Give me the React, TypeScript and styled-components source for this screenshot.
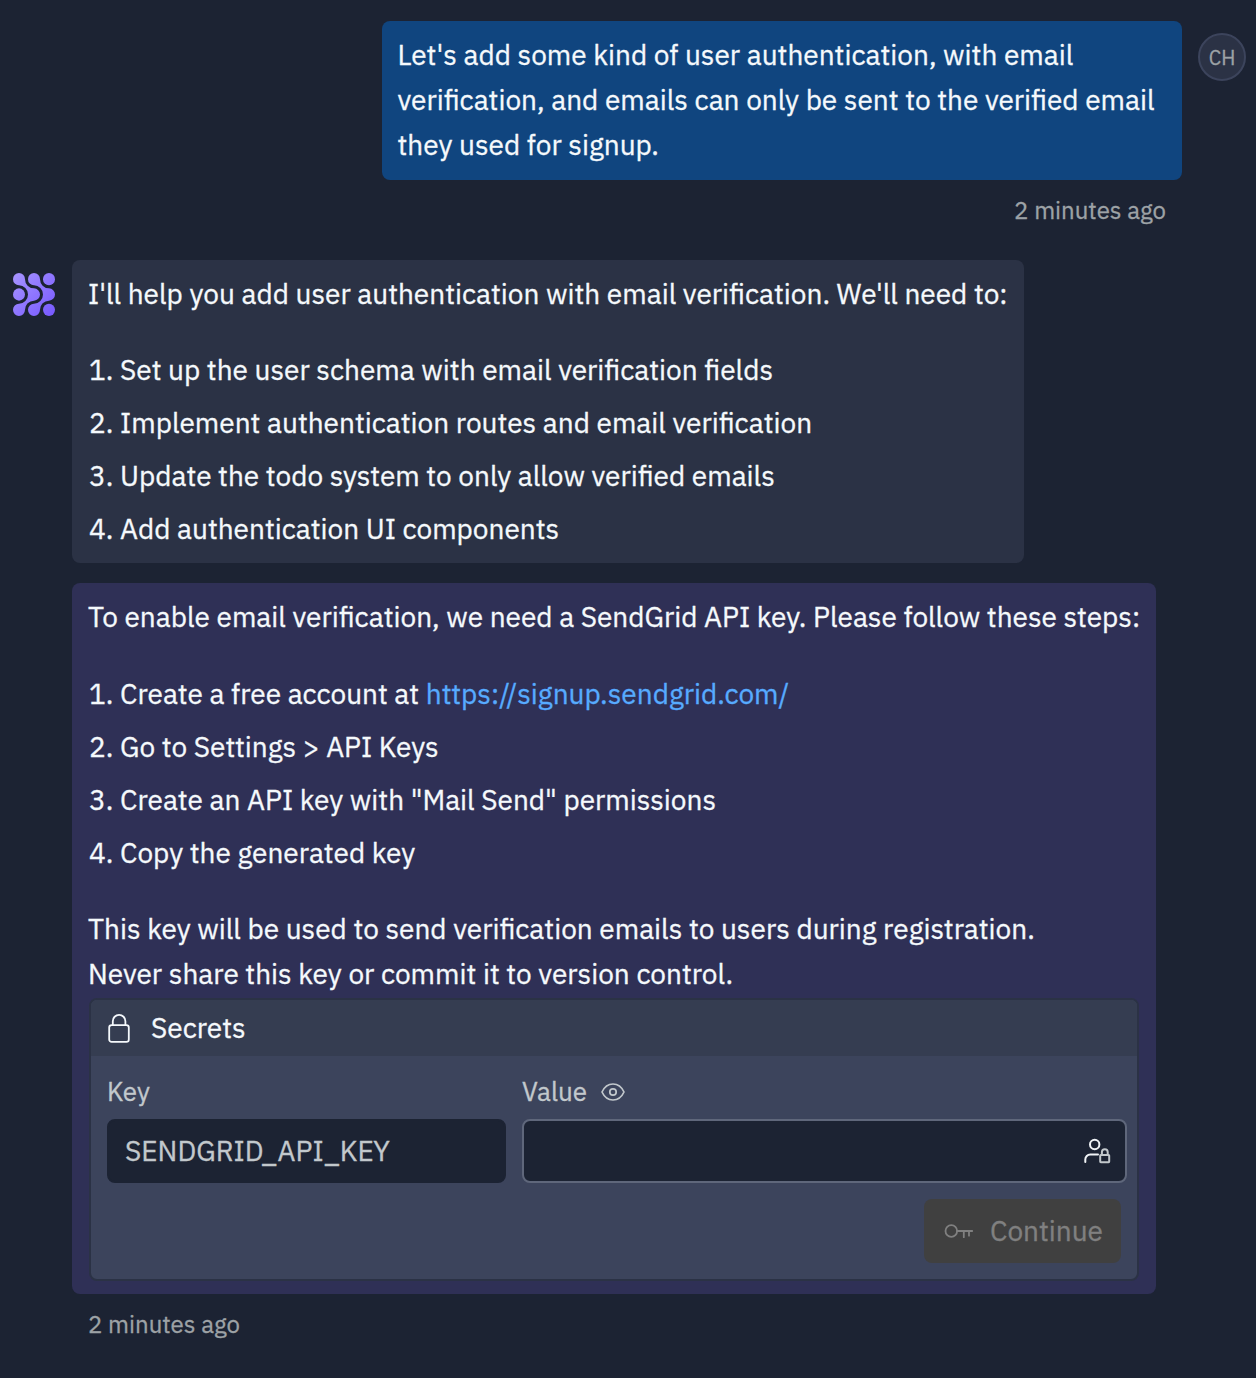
import type { ReactNode } from "react";
import styled, { createGlobalStyle } from "styled-components";

const color = {
  page: "#1c2333",
  raised: "#2b3245",
  panel: "#3c445c",
  header: "#353d51",
  user: "#10457f",
  accent: "#2f3056",
  text: "#f5f9fc",
  dim: "#c2c8cc",
  dimmer: "#9da2a6",
  link: "#57abff",
};

const GlobalStyle = createGlobalStyle`
  * { box-sizing: border-box; }
  body {
    margin: 0;
    background: ${color.page};
    color: ${color.text};
    font-family: "IBM Plex Sans", "Open Sans", sans-serif;
    font-size: 28px;
    line-height: 45px;
    -webkit-text-stroke: 0.3px currentColor;
  }
`;

const Chat = styled.main`
  display: flex;
  flex-direction: column;
  width: 1256px;
  height: 1378px;
  padding-top: 21px;
  overflow: hidden;
`;

const UserMessage = styled.section`
  display: flex;
  justify-content: flex-end;
  align-items: flex-start;
  gap: 16px;
  padding-right: 10px;
`;

const UserColumn = styled.div`
  display: flex;
  flex-direction: column;
  align-items: flex-end;
`;

const Bubble = styled.article<{ $tone: "user" | "plain" | "request"; $width: number; $height: number }>`
  width: ${(p) => p.$width}px;
  height: ${(p) => p.$height}px;
  padding: 11px 16px 0 ${(p) => (p.$tone === "user" ? 15.5 : 16)}px;
  border-radius: 8px;
  background: ${(p) => ({ user: color.user, plain: color.raised, request: color.accent })[p.$tone]};
`;

const Line = styled.div`
  white-space: pre;
`;

const Timestamp = styled.time`
  display: block;
  margin-top: 12px;
  padding: 0 16px;
  font-size: 24px;
  line-height: 36px;
  color: ${color.dimmer};
`;

const Avatar = styled.div`
  display: flex;
  align-items: center;
  justify-content: center;
  width: 48px;
  height: 48px;
  margin-top: 12px;
  padding-top: 2px;
  border: 2px solid ${color.panel};
  border-radius: 50%;
  background: ${color.raised};
  color: ${color.dimmer};
  font-size: 20px;
  line-height: 24px;
`;

const AgentMessage = styled.section`
  display: flex;
  align-items: flex-start;
  gap: 17px;
  margin-top: 32px;
  padding-left: 13px;
`;

const LogoSlot = styled.div`
  width: 42px;
  height: 43px;
  margin-top: 13px;
  line-height: 0;
`;

const AgentColumn = styled.div`
  display: flex;
  flex-direction: column;
`;

const Replies = styled.div`
  display: flex;
  flex-direction: column;
  gap: 20px;
`;

const Steps = styled.ol<{ $top: number }>`
  display: flex;
  flex-direction: column;
  gap: 8px;
  margin: ${(p) => p.$top}px 0 0;
  padding: 0;
  list-style: none;
`;

const Step = styled.li`
  display: grid;
  grid-template-columns: 32px 1fr;
`;

const Marker = styled.span`
  padding-left: 1px;
`;

const Link = styled.a`
  color: ${color.link};
  text-decoration: none;
`;

const Note = styled.div`
  margin-top: 31px;
`;

const Secrets = styled.div`
  display: flex;
  flex-direction: column;
  width: 1050px;
  height: 283px;
  margin: 2px 0 0 1px;
  border: 2px solid ${color.raised};
  border-radius: 8px;
  background: ${color.panel};
  overflow: hidden;
`;

const SecretsHeader = styled.header`
  display: flex;
  align-items: center;
  gap: 21px;
  height: 56px;
  padding: 0 17px 1px;
  background: ${color.header};
`;

const Form = styled.div`
  display: grid;
  grid-template-columns: 399px 605px;
  column-gap: 16px;
  padding: 17px 0 0 16px;
`;

const Label = styled.label`
  display: flex;
  align-items: center;
  gap: 14px;
  height: 46px;
  padding-bottom: 10px;
  font-size: 26px;
  line-height: 36px;
  color: ${color.dim};
`;

const Field = styled.div<{ $outlined?: boolean }>`
  display: flex;
  align-items: center;
  justify-content: ${(p) => (p.$outlined ? "flex-end" : "flex-start")};
  height: 64px;
  padding: 0 ${(p) => (p.$outlined ? "14px" : "16px 1px")};
  border: 2px solid ${(p) => (p.$outlined ? "#5f677b" : color.page)};
  border-radius: 8px;
  background: ${color.page};
  color: ${color.dim};
`;

const Actions = styled.div`
  display: flex;
  justify-content: flex-end;
  margin-top: 16px;
  padding-right: 16px;
`;

const Button = styled.button`
  display: flex;
  align-items: center;
  gap: 16px;
  width: 197px;
  height: 64px;
  padding: 0 0 1px 20px;
  border: 0;
  border-radius: 8px;
  background: #404040;
  color: #808080;
  font: inherit;
`;

const Glyph = styled.svg<{ $drop?: number }>`
  flex: none;
  margin-top: ${(p) => p.$drop ?? 0}px;
  fill: none;
  stroke: currentColor;
  stroke-linecap: round;
  stroke-linejoin: round;
`;

type IconProps = { w: number; h: number; stroke?: number; drop?: number; children: ReactNode };

const Icon = ({ w, h, stroke = 1.8, drop, children }: IconProps) => (
  <Glyph width={w} height={h} viewBox={`0 0 ${w} ${h}`} strokeWidth={stroke} $drop={drop}>
    {children}
  </Glyph>
);

const LockIcon = () => (
  <Icon w={22} h={29} drop={2}>
    <rect x="1.2" y="11.2" width="19.6" height="16.6" rx="2.4" />
    <path d="M4.8 11V7.2a6.300 6.300 0 0 1 12.600 0V11" />
  </Icon>
);

const EyeIcon = () => (
  <Icon w={24} h={18} stroke={1.7} drop={2}>
    <path d="M1 9C3.3 4 7.2 1 12 1s8.7 3 11 8c-2.3 5-6.2 8-11 8S3.3 14 1 9Z" />
    <circle cx="12" cy="9" r="3.2" />
  </Icon>
);

const UserLockIcon = () => (
  <Icon w={27} h={26} stroke={2}>
    <g stroke="#f0f3f6">
      <circle cx="10.7" cy="6.5" r="4.7" />
      <path d="M1.3 24v-2.500a5 5 0 0 1 5-5H14" />
    </g>
    <rect x="16.2" y="17" width="9" height="7.2" rx="0.6" />
    <path d="M17.900 17v-2.900a2.900 2.900 0 0 1 5.800 0V17" />
  </Icon>
);

const KeyIcon = () => (
  <Icon w={30} h={16}>
    <circle cx="7.3" cy="8" r="5.8" />
    <path d="M13 8h15.200M19.800 8v6.200M25 8v4.700" />
  </Icon>
);

const Logo = () => (
  <svg width="42" height="43" viewBox="0 0 42 42" preserveAspectRatio="none">
    <defs>
      <linearGradient id="agent" gradientUnits="userSpaceOnUse" x1="0" y1="0" x2="42" y2="42">
        <stop offset="0" stopColor="#a794ff" />
        <stop offset="1" stopColor="#7658ff" />
      </linearGradient>
    </defs>
    <g fill="url(#agent)">
      <path d="M6 0A6 6 0 0 1 12 6A9 9 0 0 0 21 15A6 6 0 0 1 21 27A9 9 0 0 0 12 36A6 6 0 1 1 6 30A9 9 0 0 0 6 12A6 6 0 0 1 6 0Z" />
      <path d="M21 0A6 6 0 0 1 27 6A9 9 0 0 0 36 15A6 6 0 0 1 36 27A9 9 0 0 0 27 36A6 6 0 1 1 21 30A9 9 0 0 0 21 12A6 6 0 0 1 21 0Z" />
      <circle cx="6" cy="21" r="6" />
      <circle cx="36" cy="6" r="6" />
      <circle cx="36" cy="36" r="6" />
    </g>
  </svg>
);

type StepItem = { text: string; link?: string };

const plan: StepItem[] = [
  { text: "Set up the user schema with email verification fields" },
  { text: "Implement authentication routes and email verification" },
  { text: "Update the todo system to only allow verified emails" },
  { text: "Add authentication UI components" },
];

const instructions: StepItem[] = [
  { text: "Create a free account at ", link: "https://signup.sendgrid.com/" },
  { text: "Go to Settings > API Keys" },
  { text: 'Create an API key with "Mail Send" permissions' },
  { text: "Copy the generated key" },
];

const StepList = ({ items, top }: { items: StepItem[]; top: number }) => (
  <Steps $top={top}>
    {items.map((item, i) => (
      <Step key={item.text}>
        <Marker>{i + 1}.</Marker>
        <Line>
          {item.text}
          {item.link && <Link href={item.link}>{item.link}</Link>}
        </Line>
      </Step>
    ))}
  </Steps>
);

export default function App() {
  return (
    <>
      <GlobalStyle />
      <Chat>
        <UserMessage>
          <UserColumn>
            <Bubble $tone="user" $width={800} $height={159}>
              <Line>Let's add some kind of user authentication, with email</Line>
              <Line>verification, and emails can only be sent to the verified email</Line>
              <Line>they used for signup.</Line>
            </Bubble>
            <Timestamp>2 minutes ago</Timestamp>
          </UserColumn>
          <Avatar>CH</Avatar>
        </UserMessage>

        <AgentMessage>
          <LogoSlot>
            <Logo />
          </LogoSlot>
          <AgentColumn>
            <Replies>
              <Bubble $tone="plain" $width={952} $height={303}>
                <Line>I'll help you add user authentication with email verification. We'll need to:</Line>
                <StepList items={plan} top={31} />
              </Bubble>
              <Bubble $tone="request" $width={1084} $height={711}>
                <Line>To enable email verification, we need a SendGrid API key. Please follow these steps:</Line>
                <StepList items={instructions} top={32} />
                <Note>
                  <Line>This key will be used to send verification emails to users during registration.</Line>
                  <Line>Never share this key or commit it to version control.</Line>
                </Note>
                <Secrets>
                  <SecretsHeader>
                    <LockIcon />
                    <Line>Secrets</Line>
                  </SecretsHeader>
                  <Form>
                    <Label>Key</Label>
                    <Label>
                      Value
                      <EyeIcon />
                    </Label>
                    <Field>
                      <Line>SENDGRID_API_KEY</Line>
                    </Field>
                    <Field $outlined>
                      <UserLockIcon />
                    </Field>
                  </Form>
                  <Actions>
                    <Button disabled>
                      <KeyIcon />
                      Continue
                    </Button>
                  </Actions>
                </Secrets>
              </Bubble>
            </Replies>
            <Timestamp>2 minutes ago</Timestamp>
          </AgentColumn>
        </AgentMessage>
      </Chat>
    </>
  );
}
